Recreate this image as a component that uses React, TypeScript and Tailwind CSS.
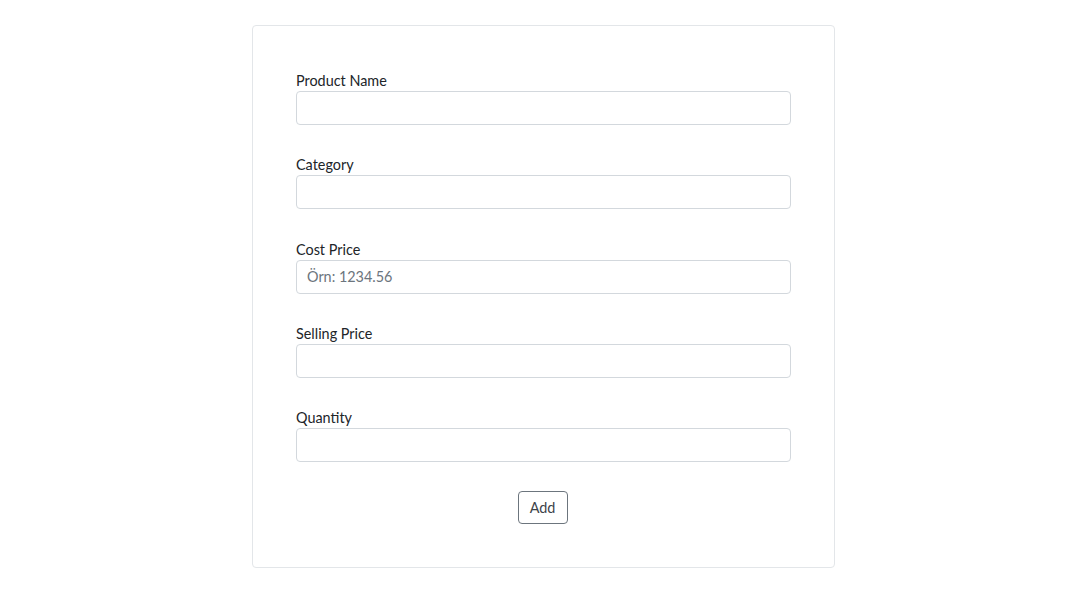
const fields = [
  { label: 'Product Name', placeholder: '' },
  { label: 'Category', placeholder: '' },
  { label: 'Cost Price', placeholder: 'Örn: 1234.56' },
  { label: 'Selling Price', placeholder: '' },
  { label: 'Quantity', placeholder: '' },
]

export default function App() {
  return (
    <div className="min-h-screen bg-white pl-[252px] pt-[25px] font-['Lato','Segoe_UI',sans-serif] text-[14.4px] text-[#212529]">
      <div className="w-[583px] rounded-[4px] border border-[#e3e6e9] bg-white px-[43px] pb-[43px] pt-[44px]">
        <form className="flex flex-col gap-[29.25px]" onSubmit={(e) => e.preventDefault()}>
          {fields.map((f) => (
            <div key={f.label} className="flex flex-col">
              <label className="h-[21px] leading-[21px]">{f.label}</label>
              <input
                type="text"
                placeholder={f.placeholder}
                className="h-[34px] w-full rounded-[4px] border border-[#d3d8dd] bg-white px-[10px] text-[14.4px] text-[#212529] outline-none placeholder:text-[#6c757d]"
              />
            </div>
          ))}
          <div className="flex justify-center pr-[2px]">
            <button
              type="submit"
              className="h-[33px] w-[50px] rounded-[4px] border border-[#6c757d] bg-white text-[14.4px] text-[#3d434a]"
            >
              Add
            </button>
          </div>
        </form>
      </div>
    </div>
  )
}
